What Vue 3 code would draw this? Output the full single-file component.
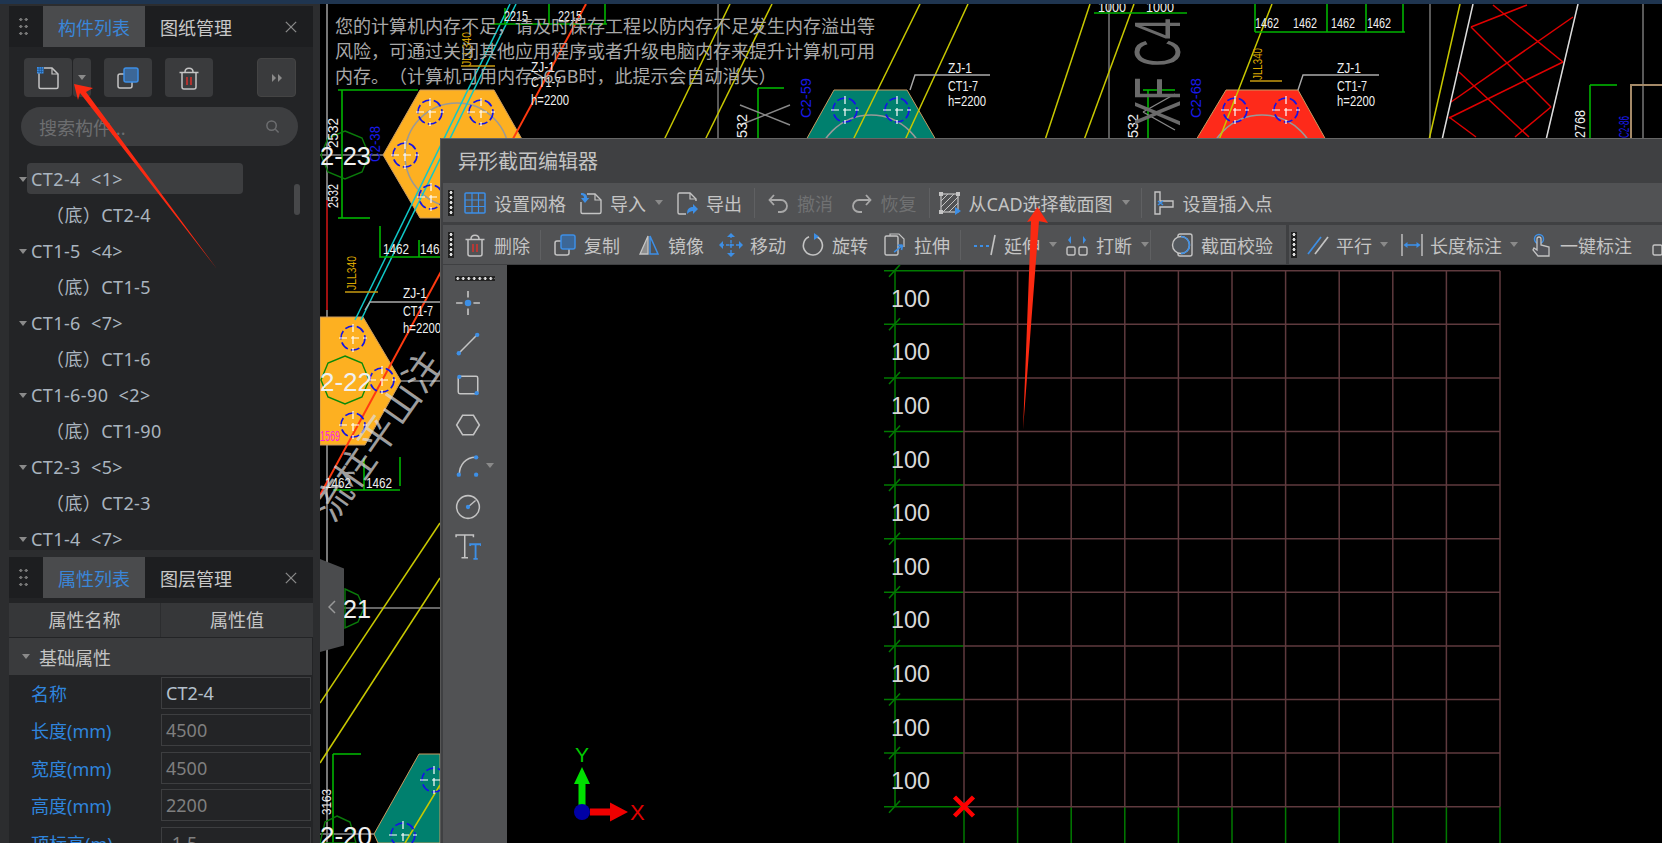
<template>
  <div class="screen">
    <div class="top-strip"></div>
    <div class="workspace">
      <!-- left dock -->
      <aside class="dock">
        <section class="panel list-panel">
          <header class="panel-head">
            <span class="grip-v"></span>
            <span class="tab active">构件列表</span>
            <span class="tab">图纸管理</span>
            <svg class="close" viewBox="0 0 14 14"><path d="M1 1l12 12M13 1L1 13" /></svg>
          </header>
          <div class="list-tools">
            <button class="icon-btn">
              <svg viewBox="0 0 24 24" v-html="icons.newPage"></svg>
            </button>
            <button class="drop-btn"><i class="caret"></i></button>
            <button class="icon-btn spaced">
              <svg viewBox="0 0 24 24" v-html="icons.copy"></svg>
            </button>
            <button class="icon-btn del">
              <svg viewBox="0 0 24 24" v-html="icons.trash"></svg>
            </button>
            <button class="more-btn">
              <svg viewBox="0 0 12 8"><path d="M1 0l4 4-4 4zM7 0l4 4-4 4z" /></svg>
            </button>
          </div>
          <div class="search">
            <span>搜索构件...</span>
            <svg viewBox="0 0 16 16"><circle cx="7" cy="7" r="5" /><path d="M11 11l3.5 3.5" /></svg>
          </div>
          <ul class="tree">
            <li
              v-for="(row, i) in tree"
              :key="i"
              class="tree-row"
              :class="{ child: row.child, selected: i === 0 }"
            >
              <i v-if="!row.child" class="caret"></i>
              <span>{{ row.text }}</span>
            </li>
          </ul>
          <div class="scroll-thumb"></div>
        </section>

        <section class="panel props-panel">
          <header class="panel-head">
            <span class="grip-v"></span>
            <span class="tab active">属性列表</span>
            <span class="tab">图层管理</span>
            <svg class="close" viewBox="0 0 14 14"><path d="M1 1l12 12M13 1L1 13" /></svg>
          </header>
          <div class="props-head">
            <span>属性名称</span>
            <span>属性值</span>
          </div>
          <div class="props-group"><i class="caret"></i>基础属性</div>
          <div v-for="p in props" :key="p.name" class="prop-row">
            <label>{{ p.name }}</label>
            <div class="prop-value" :class="{ muted: p.muted }">{{ p.value }}</div>
          </div>
        </section>
      </aside>

      <main class="cad">
        <!-- drawing behind everything -->
        <svg class="cad-drawing" viewBox="320 4 1342 839">
          <line x1="327" y1="4" x2="327" y2="843" stroke="#777" stroke-width="2" />
          <line x1="327" y1="200" x2="327" y2="310" stroke="#a01010" stroke-width="2" />
          <line v-for="x in [718, 1109, 1430, 1643]" :key="x" :x1="x" y1="4" :x2="x" y2="140" stroke="#777" stroke-width="1.5" />
          <line x1="320" y1="155" x2="440" y2="155" stroke="#888" stroke-width="1.5" />
          <line x1="320" y1="381" x2="440" y2="381" stroke="#888" stroke-width="1.5" />
          <line x1="344" y1="608" x2="440" y2="608" stroke="#888" stroke-width="1.5" />
          <line x1="320" y1="834" x2="440" y2="834" stroke="#888" stroke-width="1.5" />

          <polygon points="420,90 494,90 531,155 494,218 420,218 383,155" fill="#fdb021" stroke="#c89a60" />
          <polygon points="320,317 363,317 401,381 365,445 320,445" fill="#fdb021" stroke="#c89a60" />
          <polygon points="834,90 907,90 936,140 806,140" fill="#00806e" stroke="#c89a60" />
          <polygon points="419,754 440,754 440,843 378,843 374,834" fill="#00806e" stroke="#c89a60" />
          <polygon points="1226,90 1298,90 1326,140 1196,140" fill="#fe2a1a" stroke="#c89a60" />
          <circle cx="457" cy="155" r="52" fill="none" stroke="#999" stroke-width="1.5" />
          <circle cx="871" cy="170" r="55" fill="none" stroke="#999" stroke-width="1.5" />
          <circle cx="1262" cy="170" r="55" fill="none" stroke="#999" stroke-width="1.5" />

          <line v-for="(l, i) in yellowLines" :key="'y' + i" :x1="l[0]" :y1="l[1]" :x2="l[2]" :y2="l[3]" stroke="#c8c800" stroke-width="1.5" />
          <line x1="586" y1="4" x2="320" y2="495" stroke="#ff3a10" stroke-width="2" />
          <line v-for="(l, i) in cyanLines" :key="'c' + i" :x1="l[0]" :y1="l[1]" :x2="l[2]" :y2="l[3]" stroke="#10c8c8" stroke-width="1.5" />

          <line v-for="(l, i) in latticeRed" :key="'r' + i" :x1="l[0]" :y1="l[1]" :x2="l[2]" :y2="l[3]" stroke="#e00000" stroke-width="1.5" />
          <line x1="1473" y1="4" x2="1442" y2="140" stroke="#ddd" stroke-width="1.5" />
          <line x1="1578" y1="4" x2="1546" y2="140" stroke="#ddd" stroke-width="1.5" />

          <g v-for="(h, i) in holes" :key="'h' + i">
            <circle :cx="h[0]" :cy="h[1]" r="12" fill="none" stroke="#1414e6" stroke-width="1.6" stroke-dasharray="9 3" />
            <path :d="`M${h[0] - 14} ${h[1]}h28M${h[0]} ${h[1] - 14}v28`" stroke="#fff" stroke-width="1.2" stroke-dasharray="8 4" />
          </g>

          <polyline v-for="(l, i) in greenLines" :key="'g' + i" :points="l" fill="none" stroke="#00b400" stroke-width="1.6" />
          <polygon points="345,131 362,138 369,155 362,172 345,179 328,172 321,155 328,138" fill="none" stroke="#0a7a0a" stroke-width="1.4" />
          <polygon points="345,356 362,363 369,380 362,397 345,404 328,397 321,380 328,363" fill="none" stroke="#0a8a0a" stroke-width="1.4" />
          <polygon points="345,589 358,595 364,608 358,622 345,628" fill="none" stroke="#0a7a0a" stroke-width="1.4" />
          <polygon points="337,816 350,822 356,843 320,843 325,822" fill="none" stroke="#0a7a0a" stroke-width="1.4" />

          <polyline v-for="(l, i) in leaderLines" :key="'w' + i" :points="l" fill="none" stroke="#aaa" stroke-width="1.4" />
          <line x1="345" y1="292" x2="378" y2="292" stroke="#c89b10" stroke-width="1.5" />
          <line x1="461" y1="66" x2="495" y2="66" stroke="#c89b10" stroke-width="1.5" />
          <line x1="1250" y1="81" x2="1282" y2="81" stroke="#c89b10" stroke-width="1.5" />
          <polyline points="1631,140 1631,85 1662,85" fill="none" stroke="#a58a68" stroke-width="2" />
          <path d="M740 105l50 20M740 125l50-20M1143 112l32-18M1143 112l32 18" stroke="#888" stroke-width="1.4" fill="none" />

          <text
            v-for="(t, i) in cadLabels"
            :key="'t' + i"
            :x="t.x"
            :y="t.y"
            :fill="t.fill || '#f0f0f0'"
            :fill-opacity="t.alpha"
            :font-size="t.size"
            :textLength="t.len"
            :transform="t.rot ? `rotate(${t.rot} ${t.x} ${t.y})` : undefined"
            lengthAdjust="spacingAndGlyphs"
            class="cad-text"
          >{{ t.text }}</text>
        </svg>

        <p class="memory-tip">
          您的计算机内存不足，请及时保存工程以防内存不足发生内存溢出等<br />
          风险，可通过关闭其他应用程序或者升级电脑内存来提升计算机可用<br />
          内存。（计算机可用内存>6GB时，此提示会自动消失）
        </p>

        <div class="collapse-tab">
          <svg viewBox="0 0 8 14"><path d="M7 1L1 7l6 6" /></svg>
        </div>

        <!-- section editor window -->
        <div class="editor">
          <div class="editor-title">异形截面编辑器</div>
          <div class="toolbar bar-one">
            <span class="grip-h"></span>
            <template v-for="(t, i) in barOne" :key="i">
              <span v-if="t.sep" class="sep"></span>
              <span v-else class="tool" :class="{ off: t.off }">
                <svg viewBox="0 0 24 24" v-html="icons[t.icon]"></svg>
                <span>{{ t.text }}</span>
                <i v-if="t.drop" class="caret"></i>
              </span>
            </template>
          </div>
          <div class="bar-two">
            <div class="toolbar main-tools">
              <span class="grip-h"></span>
              <template v-for="(t, i) in barTwo" :key="i">
                <span v-if="t.sep" class="sep"></span>
                <span v-else class="tool">
                  <svg viewBox="0 0 24 24" v-html="icons[t.icon]"></svg>
                  <span>{{ t.text }}</span>
                  <i v-if="t.drop" class="caret"></i>
                </span>
              </template>
            </div>
            <div class="toolbar dim-tools">
              <span class="grip-h"></span>
              <span v-for="t in barThree" :key="t.text" class="tool">
                <svg viewBox="0 0 24 24" v-html="icons[t.icon]"></svg>
                <span>{{ t.text }}</span>
                <i v-if="t.drop" class="caret"></i>
              </span>
              <svg class="cut-icon" viewBox="0 0 24 24" v-html="icons.dimAngle"></svg>
            </div>
          </div>
          <div class="editor-body">
            <div class="draw-tools">
              <span class="grip-top"></span>
              <span v-for="name in drawTools" :key="name" class="draw-tool">
                <svg viewBox="0 0 24 24" v-html="icons[name]"></svg>
                <i v-if="name === 'arc'" class="caret"></i>
              </span>
            </div>
            <svg class="section-canvas" viewBox="507 265 1155 578">
              <line v-for="(y, i) in gridY" :key="'gy' + i" x1="884" :y1="y" x2="964" :y2="y" stroke="#007a00" stroke-width="1.5" />
              <line x1="895" y1="270.7" x2="895" y2="806.7" stroke="#007a00" stroke-width="1.5" />
              <line v-for="(y, i) in gridY" :key="'gt' + i" x1="889" :y1="y + 6" x2="900" :y2="y - 6" stroke="#007a00" stroke-width="1.5" />
              <line v-for="(x, i) in gridX" :key="'gd' + i" :x1="x" y1="806.7" :x2="x" y2="843" stroke="#007a00" stroke-width="1.5" />
              <line v-for="(x, i) in gridX" :key="'vx' + i" :x1="x" y1="270.7" :x2="x" y2="806.7" stroke="#5f3a3e" stroke-width="1.5" />
              <line v-for="(y, i) in gridY" :key="'hy' + i" x1="964" :y1="y" x2="1500" :y2="y" stroke="#5f3a3e" stroke-width="1.5" />
              <text
                v-for="(y, i) in gridY.slice(0, 10)"
                :key="'n' + i"
                x="891"
                :y="y + 36"
                fill="#d8d8d8"
                font-size="24"
                textLength="39"
                lengthAdjust="spacingAndGlyphs"
                class="cad-text"
              >100</text>
              <path d="M954.5 797l19 19M973.5 797l-19 19" stroke="#f00" stroke-width="4.5" />
              <!-- axis gizmo -->
              <path d="M578.5 812v-28h-4.5l8-17 8 17h-4.5v28z" fill="#00e000" />
              <path d="M590 808.5h20v-6l18 9.5-18 9.5v-6h-20z" fill="#f00000" />
              <circle cx="582" cy="812" r="8" fill="#0000a6" />
              <text x="575" y="762" fill="#00c800" font-size="21" class="cad-text">Y</text>
              <text x="630" y="820" fill="#e00000" font-size="22" class="cad-text">X</text>
            </svg>
          </div>
        </div>
      </main>
    </div>

    <!-- red arrows drawn on the screenshot -->
    <svg class="marks" viewBox="0 0 1662 843">
      <path d="M74 84L93 88 86 92 217 269 80 93 78 100z" fill="#fb2a12" />
      <path d="M1037.5 207L1048 223 1039 221 1023 430 1031 221 1027 222z" fill="#fb2a12" />
    </svg>
  </div>
</template>

<script setup>
const tree = [
  { text: 'CT2-4  <1>' },
  { text: '（底）CT2-4', child: true },
  { text: 'CT1-5  <4>' },
  { text: '（底）CT1-5', child: true },
  { text: 'CT1-6  <7>' },
  { text: '（底）CT1-6', child: true },
  { text: 'CT1-6-90  <2>' },
  { text: '（底）CT1-90', child: true },
  { text: 'CT2-3  <5>' },
  { text: '（底）CT2-3', child: true },
  { text: 'CT1-4  <7>' }
]

const props = [
  { name: '名称', value: 'CT2-4' },
  { name: '长度(mm)', value: '4500', muted: true },
  { name: '宽度(mm)', value: '4500', muted: true },
  { name: '高度(mm)', value: '2200', muted: true },
  { name: '顶标高(m)', value: '-1.5', muted: true }
]

const barOne = [
  { icon: 'grid', text: '设置网格' },
  { icon: 'importFile', text: '导入', drop: true },
  { icon: 'exportFile', text: '导出' },
  { sep: true },
  { icon: 'undo', text: '撤消', off: true },
  { icon: 'redo', text: '恢复', off: true },
  { sep: true },
  { icon: 'fromCad', text: '从CAD选择截面图', drop: true },
  { sep: true },
  { icon: 'insertPoint', text: '设置插入点' }
]

const barTwo = [
  { icon: 'trash', text: '删除' },
  { sep: true },
  { icon: 'copy', text: '复制' },
  { icon: 'mirror', text: '镜像' },
  { icon: 'move', text: '移动' },
  { icon: 'rotate', text: '旋转' },
  { icon: 'stretch', text: '拉伸' },
  { sep: true },
  { icon: 'extend', text: '延伸', drop: true },
  { icon: 'breakLine', text: '打断', drop: true },
  { sep: true },
  { icon: 'check', text: '截面校验' }
]

const barThree = [
  { icon: 'parallel', text: '平行', drop: true },
  { icon: 'lengthDim', text: '长度标注', drop: true },
  { icon: 'hand', text: '一键标注' }
]

const drawTools = ['point', 'line', 'rect', 'hexagon', 'arc', 'circle', 'textTool']

const W = '#c4c4c4'
const B = '#3d8fe6'

const icons = {
  newPage: `<path d="M3 7v14a1.5 1.5 0 0 0 1.5 1.5h16A1.5 1.5 0 0 0 22 21V8l-6-6H8" fill="none" stroke="${W}" stroke-width="1.5"/><path d="M16 2v6h6" fill="none" stroke="${W}" stroke-width="1.2"/><rect x="1" y="1" width="6.5" height="6.5" fill="${B}"/><path d="M1 3.2h6.5M1 5.4h6.5M3.2 1v6.5M5.4 1v6.5" stroke="#1d4f88" stroke-width=".7"/>`,
  copy: `<rect x="2" y="8" width="14" height="14" rx="2" fill="none" stroke="${W}" stroke-width="1.5"/><rect x="8" y="2" width="14" height="14" rx="2" fill="#3c6797" stroke="${B}" stroke-width="1.5"/>`,
  trash: `<path d="M5 7v14a2 2 0 0 0 2 2h10a2 2 0 0 0 2-2V7M2.5 6.5h19M8 6c0-5 8-5 8 0" fill="none" stroke="${W}" stroke-width="1.5"/><path d="M10 11v8M14 11v8" stroke="#d8322c" stroke-width="1.5"/>`,
  grid: `<rect x="2" y="2" width="20" height="20" rx="1" fill="none" stroke="${B}" stroke-width="1.5"/><path d="M2 9h20M2 15.5h20M9 2v20M15.5 2v20" stroke="${B}" stroke-width="1.2"/>`,
  importFile: `<path d="M8 3h8l6 6v12a1.5 1.5 0 0 1-1.5 1.5h-17A1.5 1.5 0 0 1 2 21V11" fill="none" stroke="${W}" stroke-width="1.4"/><path d="M16 3v6h6" fill="none" stroke="${W}" stroke-width="1.2"/><path d="M2 2c4 0 6 1.5 6 5h2.2L6 12 2 7h3c0-1.8-1-3-3-3z" fill="${B}"/>`,
  exportFile: `<path d="M21 10V8l-6-6H4.5A1.5 1.5 0 0 0 3 3.5v18A1.5 1.5 0 0 0 4.5 23H11" fill="none" stroke="${W}" stroke-width="1.4"/><path d="M15 2v6h6" fill="none" stroke="${W}" stroke-width="1.2"/><path d="M12 23c0-5 2-7 6-7v-3l5 5-5 5v-3c-2 0-4 1-6 3z" fill="${B}"/>`,
  undo: `<path d="M4 9h11a6 6 0 0 1 0 12h-3" fill="none" stroke="#a8a8a8" stroke-width="1.8"/><path d="M8 4L3.5 9 8 14" fill="none" stroke="#a8a8a8" stroke-width="1.8"/>`,
  redo: `<path d="M20 9H9a6 6 0 0 0 0 12h3" fill="none" stroke="#a8a8a8" stroke-width="1.8"/><path d="M16 4l4.5 5-4.5 5" fill="none" stroke="#a8a8a8" stroke-width="1.8"/>`,
  fromCad: `<rect x="3" y="3" width="17" height="18" fill="none" stroke="${W}" stroke-width="1.2"/><path d="M3 10l7-7M3 16l13-13M5 21L20 6M11 21l9-9" stroke="${W}" stroke-width="1"/><rect x="1" y="1" width="4" height="4" fill="${W}"/><rect x="18" y="1" width="4" height="4" fill="${W}"/><rect x="1" y="19" width="4" height="4" fill="${W}"/><path d="M17 16l6 4-6 4z" fill="${B}"/>`,
  insertPoint: `<path d="M3 1h5v9h13v6H8v7H3z" fill="none" stroke="${W}" stroke-width="1.4"/><path d="M6 10l5 4M11 10l-5 4" stroke="${B}" stroke-width="1.6"/>`,
  mirror: `<path d="M11 3v18H3z" fill="#8d8d8d" stroke="${W}" stroke-width="1.3"/><path d="M13 3v18h8z" fill="none" stroke="${B}" stroke-width="1.5"/>`,
  move: `<path d="M12 2v20M2 12h20" stroke="${B}" stroke-width="1.3" stroke-dasharray="3 2"/><path d="M12 0l4 4H8zM12 24l4-4H8zM0 12l4-4v8zM24 12l-4-4v8z" fill="${B}"/><circle cx="12" cy="12" r="1.6" fill="${B}"/>`,
  rotate: `<path d="M15 3.5A9.5 9.5 0 1 1 8 3.8" fill="none" stroke="${W}" stroke-width="1.6"/><path d="M13 0l5 3.5-5 3.5z" fill="${B}"/>`,
  stretch: `<rect x="2" y="3" width="13" height="19" rx="1.5" fill="none" stroke="${W}" stroke-width="1.4"/><path d="M7 3V1h9l5 5v8" fill="none" stroke="${W}" stroke-width="1.2"/><path d="M10 16l11 0M21 16l-4-3M21 16l-4 3" stroke="${B}" stroke-width="1.6" fill="none" transform="rotate(-40 15 16)"/>`,
  extend: `<path d="M1 13h3M7 13h3M13 13h3" stroke="${B}" stroke-width="1.8"/><path d="M22 2l-4 20" stroke="${W}" stroke-width="1.6"/>`,
  breakLine: `<rect x="2" y="14" width="8" height="8" rx="1.5" fill="none" stroke="${W}" stroke-width="1.4"/><rect x="14" y="14" width="8" height="8" rx="1.5" fill="none" stroke="${W}" stroke-width="1.4"/><path d="M3 7l3-4v8zM21 7l-3-4v8z" fill="${B}"/>`,
  check: `<rect x="8" y="1" width="14" height="22" rx="2" fill="none" stroke="${W}" stroke-width="1.4"/><circle cx="11" cy="12" r="8.5" fill="#53585e" stroke="${W}" stroke-width="1.4"/><path d="M11 3.5a8.5 8.5 0 0 1 0 17" fill="none" stroke="${B}" stroke-width="1.6"/>`,
  parallel: `<path d="M2 21L15 4" stroke="${B}" stroke-width="1.7"/><path d="M9 21L22 4" stroke="${W}" stroke-width="1.7"/>`,
  lengthDim: `<path d="M2 1v22M22 1v22" stroke="${W}" stroke-width="1.4"/><path d="M5 12h14" stroke="${B}" stroke-width="1.6"/><path d="M3.5 12l4-3v6zM20.5 12l-4-3v6z" fill="${B}"/>`,
  hand: `<circle cx="9" cy="6" r="4.5" fill="none" stroke="${B}" stroke-width="1.5"/><path d="M7 6v11l-3-2-1 2 5 6h11v-9l-8-2V6a1.5 1.5 0 0 0-4 0z" fill="#53545a" stroke="${W}" stroke-width="1.3"/>`,
  dimAngle: `<rect x="2" y="12" width="9" height="10" rx="1.5" fill="none" stroke="${W}" stroke-width="1.4"/><path d="M11 18h12M12 2v10" stroke="${W}" stroke-width="1.4"/>`,
  point: `<path d="M12 1v6M12 17v6M1 12h6M17 12h6" stroke="${W}" stroke-width="1.5"/><circle cx="12" cy="12" r="3" fill="${B}"/>`,
  line: `<path d="M4 20L20 4" stroke="${W}" stroke-width="1.4"/><circle cx="3.5" cy="20.5" r="2" fill="${B}"/><circle cx="20.5" cy="3.5" r="2" fill="${B}"/>`,
  rect: `<rect x="3" y="4" width="18" height="16" rx="1.5" fill="none" stroke="${W}" stroke-width="1.4"/><circle cx="4" cy="4.5" r="2" fill="${B}"/><circle cx="20" cy="19.5" r="2" fill="${B}"/>`,
  hexagon: `<path d="M7 3h10l5.5 9L17 21H7L1.5 12z" fill="none" stroke="${W}" stroke-width="1.4"/>`,
  arc: `<path d="M4 20C4 11 10 4 19 4" fill="none" stroke="${W}" stroke-width="1.4"/><circle cx="3.5" cy="20" r="2" fill="${B}"/><circle cx="19.5" cy="4" r="2" fill="${B}"/><circle cx="19.5" cy="20" r="2" fill="${B}"/>`,
  circle: `<circle cx="12" cy="12" r="10.5" fill="none" stroke="${W}" stroke-width="1.4"/><path d="M12 12l7-6" stroke="${W}" stroke-width="1.3"/><circle cx="12" cy="12" r="2" fill="${B}"/>`,
  textTool: `<path d="M1 3V1h16v2M9 1v21M6 22h6" fill="none" stroke="${W}" stroke-width="1.4"/><path d="M14 11v-1.5h10V11M19 9.5V23M17 23h4" fill="none" stroke="${B}" stroke-width="1.7"/>`
}

const gridX = Array.from({ length: 11 }, (_, i) => 964 + i * 53.6)
const gridY = Array.from({ length: 11 }, (_, i) => 270.7 + i * 53.6)

const yellowLines = [
  [664, 140, 730, 4], [705, 140, 772, 4], [853, 140, 920, 4], [905, 140, 968, 4],
  [1045, 140, 1090, 4], [1084, 140, 1134, 4], [1219, 140, 1272, 4], [1429, 140, 1460, 4],
  [440, 523, 320, 703], [440, 578, 320, 763], [405, 843, 440, 785]
]

const cyanLines = [
  [510, 4, 355, 320], [516, 4, 361, 320]
]

const latticeRed = [
  [1493, 5, 1563, 62], [1471, 27, 1551, 107], [1459, 72, 1529, 137], [1449, 117, 1476, 137],
  [1573, 17, 1451, 102], [1563, 62, 1449, 118], [1551, 107, 1515, 137], [1527, 5, 1471, 27]
]

const holes = [
  [430, 112], [481, 112], [405, 155], [431, 197], [353, 338], [382, 380], [353, 425],
  [845, 110], [897, 110], [1235, 110], [1286, 110], [434, 780], [403, 835]
]

const greenLines = [
  '338,90 418,90', '342,90 342,218', '338,218 370,218',
  '380,226 380,257 440,257', '419,240 419,257',
  '490,24 607,24', '505,8 505,24', '549,4 549,24', '605,4 605,24',
  '1094,13 1187,13', '1143,90 1175,90', '1148,90 1148,140',
  '758,88 784,88', '758,88 758,140',
  '1255,32 1405,32', '1255,4 1255,32', '1327,4 1327,32', '1366,4 1366,32', '1403,4 1403,32',
  '1590,85 1617,85', '1590,85 1590,140',
  '333,490 400,490', '400,457 400,486', '364,458 364,490',
  '333,754 361,754', '333,754 333,843'
]

const leaderLines = [
  '910,90 915,75 990,75', '1298,90 1303,75 1379,75',
  '365,310 370,302 440,302'
]

const cadLabels = [
  { text: '2-23', x: 320, y: 165, size: 26, len: 51 },
  { text: '2-22', x: 320, y: 391, size: 26, len: 52 },
  { text: '21', x: 343, y: 618, size: 26, len: 28 },
  { text: '2-20', x: 320, y: 845, size: 26, len: 52 },
  { text: '1569', x: 320, y: 441, size: 14, len: 20, fill: '#ff20e0' },
  { text: '2215', x: 504, y: 21, size: 15, len: 24 },
  { text: '2215', x: 558, y: 21, size: 15, len: 24 },
  { text: '1000', x: 1098, y: 12, size: 15, len: 28 },
  { text: '1000', x: 1146, y: 12, size: 15, len: 28 },
  { text: '1462', x: 1255, y: 28, size: 15, len: 24 },
  { text: '1462', x: 1293, y: 28, size: 15, len: 24 },
  { text: '1462', x: 1331, y: 28, size: 15, len: 24 },
  { text: '1462', x: 1367, y: 28, size: 15, len: 24 },
  { text: '1462', x: 383, y: 254, size: 15, len: 26 },
  { text: '1462', x: 420, y: 254, size: 15, len: 26 },
  { text: '1462', x: 325, y: 488, size: 15, len: 26 },
  { text: '1462', x: 366, y: 488, size: 15, len: 26 },
  { text: 'ZJ-1', x: 531, y: 72, size: 14, len: 24 },
  { text: 'CT1-7', x: 531, y: 87, size: 14, len: 30 },
  { text: 'h=2200', x: 531, y: 105, size: 14, len: 38 },
  { text: 'ZJ-1', x: 948, y: 73, size: 14, len: 24 },
  { text: 'CT1-7', x: 948, y: 91, size: 14, len: 30 },
  { text: 'h=2200', x: 948, y: 106, size: 14, len: 38 },
  { text: 'ZJ-1', x: 1337, y: 73, size: 14, len: 24 },
  { text: 'CT1-7', x: 1337, y: 91, size: 14, len: 30 },
  { text: 'h=2200', x: 1337, y: 106, size: 14, len: 38 },
  { text: 'ZJ-1', x: 403, y: 298, size: 14, len: 24 },
  { text: 'CT1-7', x: 403, y: 316, size: 14, len: 30 },
  { text: 'h=2200', x: 403, y: 333, size: 14, len: 38 },
  { text: '2532', x: 338, y: 148, size: 14, len: 30, rot: -90 },
  { text: '2532', x: 338, y: 208, size: 14, len: 24, rot: -90 },
  { text: '532', x: 747, y: 138, size: 14, len: 24, rot: -90 },
  { text: '532', x: 1138, y: 138, size: 14, len: 24, rot: -90 },
  { text: '2768', x: 1585, y: 138, size: 14, len: 28, rot: -90 },
  { text: '3163', x: 331, y: 815, size: 13, len: 26, rot: -90 },
  { text: 'C2-38', x: 380, y: 162, size: 14, len: 36, fill: '#1a1ae8', rot: -90 },
  { text: 'C2-59', x: 811, y: 118, size: 14, len: 40, fill: '#1a1ae8', rot: -90 },
  { text: 'C2-68', x: 1201, y: 118, size: 14, len: 40, fill: '#1a1ae8', rot: -90 },
  { text: 'C2-86', x: 1629, y: 138, size: 14, len: 22, fill: '#1a1ae8', rot: -90 },
  { text: 'JLL340', x: 471, y: 66, size: 12, len: 34, fill: '#d8a500', rot: -90 },
  { text: 'JLL340', x: 356, y: 290, size: 12, len: 34, fill: '#d8a500', rot: -90 },
  { text: 'JLL340', x: 1262, y: 80, size: 12, len: 32, fill: '#d8a500', rot: -90 },
  { text: 'XF C4', x: 1180, y: 126, size: 64, len: 108, fill: '#6a6a6a', rot: -90 },
  { text: '流柱平山注', x: 333, y: 524, size: 38, len: 196, fill: '#dcdcdc', alpha: 0.72, rot: -55 }
]
</script>

<style>
html,
body {
  margin: 0;
  background: #000;
}
</style>

<style scoped>
.screen {
  position: relative;
  display: flex;
  flex-direction: column;
  width: 1662px;
  height: 843px;
  overflow: hidden;
  background: #000;
  font-family: "Noto Sans", "Noto Sans CJK SC", sans-serif;
  font-size: 18px;
  color: #c4c4c4;
  text-spacing-trim: space-all;
}

.top-strip {
  flex: none;
  height: 4px;
  background: #1f3550;
}

.workspace {
  flex: 1;
  display: flex;
  min-height: 0;
}

/* dock */
.dock {
  flex: none;
  width: 320px;
  box-sizing: border-box;
  padding: 2px 7px 0 9px;
  display: flex;
  flex-direction: column;
  gap: 7px;
  background: #2c2d2f;
}

.panel {
  position: relative;
  background: #232426;
  overflow: hidden;
}

.list-panel {
  flex: none;
  height: 544px;
}

.props-panel {
  flex: 1;
  min-height: 0;
}

.panel-head {
  display: flex;
  align-items: center;
  height: 41px;
  background: #1d1e20;
}

.grip-v {
  width: 10px;
  height: 21px;
  margin: 0 15px 0 9px;
  background-image: radial-gradient(circle, #777 1.5px, transparent 1.7px);
  background-size: 5.5px 7px;
}

.tab {
  height: 100%;
  width: 102px;
  display: flex;
  align-items: center;
  justify-content: center;
  color: #c8c8c8;
}

.tab + .tab {
  margin-left: 1px;
  width: 100px;
}

.tab.active {
  background: #4a4b4d;
  color: #3a86d8;
}

.close {
  width: 12px;
  height: 12px;
  margin-left: auto;
  margin-right: 16px;
  fill: none;
  stroke: #8a8a8a;
  stroke-width: 1.5;
}

.caret {
  display: inline-block;
  width: 0;
  height: 0;
  border-left: 4.5px solid transparent;
  border-right: 4.5px solid transparent;
  border-top: 5px solid #8a8a8a;
}

.list-tools {
  display: flex;
  height: 39px;
  margin: 11px 0 10px 15px;
}

.list-tools button {
  padding: 0;
  border: 0;
  background: #3a3b3d;
  border-radius: 4px;
  display: flex;
  align-items: center;
  justify-content: center;
}

.icon-btn {
  width: 48px;
}

.icon-btn svg {
  width: 24px;
  height: 24px;
}

.drop-btn {
  width: 18px;
  margin-left: 1px;
}

.icon-btn.spaced,
.icon-btn.del {
  margin-left: 13px;
}

.list-tools .more-btn {
  width: 39px;
  margin-left: 44px;
  box-sizing: border-box;
  border: 1px solid #444;
}

.more-btn svg {
  width: 12px;
  height: 8px;
  fill: #8a8a8a;
}

.search {
  display: flex;
  align-items: center;
  justify-content: space-between;
  height: 39px;
  margin: 0 15px 0 12px;
  padding: 0 18px;
  border-radius: 20px;
  background: #3d3e40;
  color: #6d6e70;
}

.search svg {
  width: 15px;
  height: 15px;
  fill: none;
  stroke: #6d6e70;
  stroke-width: 1.6;
}

.tree {
  list-style: none;
  margin: 15px 0 0;
  padding: 0;
  color: #aab4bf;
  letter-spacing: 0.4px;
}

.tree-row {
  position: relative;
  display: flex;
  align-items: center;
  height: 36px;
  box-sizing: border-box;
  padding-left: 10px;
  white-space: pre;
}

.tree-row .caret {
  margin-right: 4px;
}

.tree-row.child {
  padding-left: 37px;
  padding-bottom: 3px;
}

.tree-row.selected::before {
  content: "";
  position: absolute;
  left: 18px;
  top: 2px;
  width: 216px;
  height: 31px;
  border-radius: 4px;
  background: #3d3e40;
}

.tree-row > * {
  position: relative;
}

.scroll-thumb {
  position: absolute;
  left: 285px;
  top: 178px;
  width: 6px;
  height: 31px;
  border-radius: 3px;
  background: #47484a;
}

.props-head {
  display: grid;
  grid-template-columns: 151px 1fr;
  height: 34px;
  margin-top: 5px;
  background: #363739;
  text-align: center;
  line-height: 34px;
}

.props-head span + span {
  border-left: 1px solid #2c2d2f;
}

.props-group {
  height: 37px;
  margin: 1px 1px 0 0;
  padding-left: 13px;
  display: flex;
  align-items: center;
  background: #3a3b3d;
}

.props-group .caret {
  margin-right: 9px;
}

.prop-row {
  position: relative;
  top: -1px;
  display: grid;
  grid-template-columns: 130px 150px;
  align-items: center;
  height: 37.5px;
  padding-left: 22px;
}

.prop-row label {
  color: #2f84dd;
  white-space: nowrap;
}

.prop-value {
  height: 32px;
  box-sizing: border-box;
  padding-left: 4px;
  border: 1px solid #3d3e40;
  line-height: 30px;
  color: #b4c0cc;
}

.prop-value.muted {
  color: #7f7f7f;
}

/* cad area */
.cad {
  position: relative;
  flex: 1;
  min-width: 0;
  background: #000;
}

.cad-drawing {
  position: absolute;
  inset: 0;
  width: 100%;
  height: 100%;
}

.cad-text {
  font-family: "Liberation Sans", "Noto Sans CJK SC", sans-serif;
}

.memory-tip {
  position: absolute;
  left: 15px;
  top: 10px;
  margin: 0;
  width: 560px;
  line-height: 25px;
  color: #a8a8a8;
  white-space: nowrap;
}

.collapse-tab {
  position: absolute;
  left: 0;
  top: 555px;
  width: 24px;
  height: 96px;
  display: flex;
  align-items: center;
  justify-content: center;
  background: #4a4b4d;
  clip-path: polygon(0 0, 100% 10%, 100% 90%, 0 97%);
}

.collapse-tab svg {
  width: 8px;
  height: 14px;
  fill: none;
  stroke: #999;
  stroke-width: 1.5;
}

/* editor window */
.editor {
  position: absolute;
  left: 120px;
  top: 134px;
  width: 1240px;
  height: 720px;
  box-sizing: border-box;
  padding-left: 2px;
  display: flex;
  flex-direction: column;
  background: #3f4042;
  border-top: 1px solid #666;
  border-left: 1px solid #555;
}

.editor-title {
  flex: none;
  height: 44px;
  padding-left: 15px;
  line-height: 46px;
  font-size: 20px;
  color: #c4c4c4;
}

.toolbar {
  display: flex;
  align-items: center;
  height: 39px;
  padding-left: 5px;
  background: #515254;
  white-space: nowrap;
}

.grip-h {
  flex: none;
  width: 6px;
  height: 26px;
  margin-right: 9px;
  background-image: radial-gradient(circle, #ddd 1.4px, transparent 1.6px);
  background-size: 6px 5px;
  background-color: #222;
  background-clip: content-box;
}

.tool {
  display: flex;
  align-items: center;
  gap: 7px;
  margin-right: 13px;
}

.tool svg {
  flex: none;
  width: 24px;
  height: 24px;
}

.tool .caret {
  margin: 0 -1px 0 2px;
}

.tool.off {
  color: #707172;
  margin-right: 16.5px;
}

.sep + .tool.off {
  margin-left: 3px;
}

.sep {
  flex: none;
  width: 1px;
  height: 30px;
  margin: 0 8px 0 -1px;
  background: #5f6062;
}

.tool.off + .sep {
  margin-left: -4.5px;
}

.bar-one .sep + .tool:last-child {
  margin-left: 2px;
}

.bar-two {
  flex: none;
  display: flex;
  gap: 3px;
  margin-top: 3px;
}

.main-tools {
  flex: none;
  width: 838px;
}

.main-tools .tool {
  margin-right: 15px;
}

.main-tools .sep + .tool {
  margin-right: 17px;
}

.main-tools .sep + .tool:last-child {
  margin-left: 7px;
}

.main-tools .tool .caret {
  margin: 0 -9px 0 2px;
}

.main-tools .sep {
  margin: 0 12px 0 -5px;
}

.dim-tools {
  flex: 1;
  padding-left: 2px;
}

.dim-tools .tool {
  gap: 6px;
  margin-right: 15px;
}

.dim-tools .tool .caret {
  margin: 0 -3px 0 2px;
}

.cut-icon {
  flex: none;
  width: 24px;
  height: 24px;
  margin-left: 4px;
}

.editor-body {
  flex: 1;
  min-height: 0;
  display: flex;
  margin-top: 1px;
}

.draw-tools {
  flex: none;
  width: 64px;
  display: flex;
  flex-direction: column;
  align-items: center;
  background: #515254;
}

.grip-top {
  flex: none;
  width: 40px;
  height: 5px;
  margin: 11px 0 2px;
  background-image: radial-gradient(circle, #ddd 1.3px, transparent 1.5px);
  background-size: 5.5px 5px;
  background-color: #222;
}

.draw-tool {
  position: relative;
  flex: none;
  display: flex;
  align-items: center;
  justify-content: center;
  height: 40.7px;
  margin-right: 15px;
}

.draw-tool svg {
  width: 26px;
  height: 26px;
}

.draw-tool .caret {
  position: absolute;
  left: 31px;
  top: 17px;
}

.section-canvas {
  flex: none;
  width: 1155px;
  height: 578px;
  background: #000;
}

.marks {
  position: absolute;
  inset: 0;
  width: 1662px;
  height: 843px;
  pointer-events: none;
}
</style>
